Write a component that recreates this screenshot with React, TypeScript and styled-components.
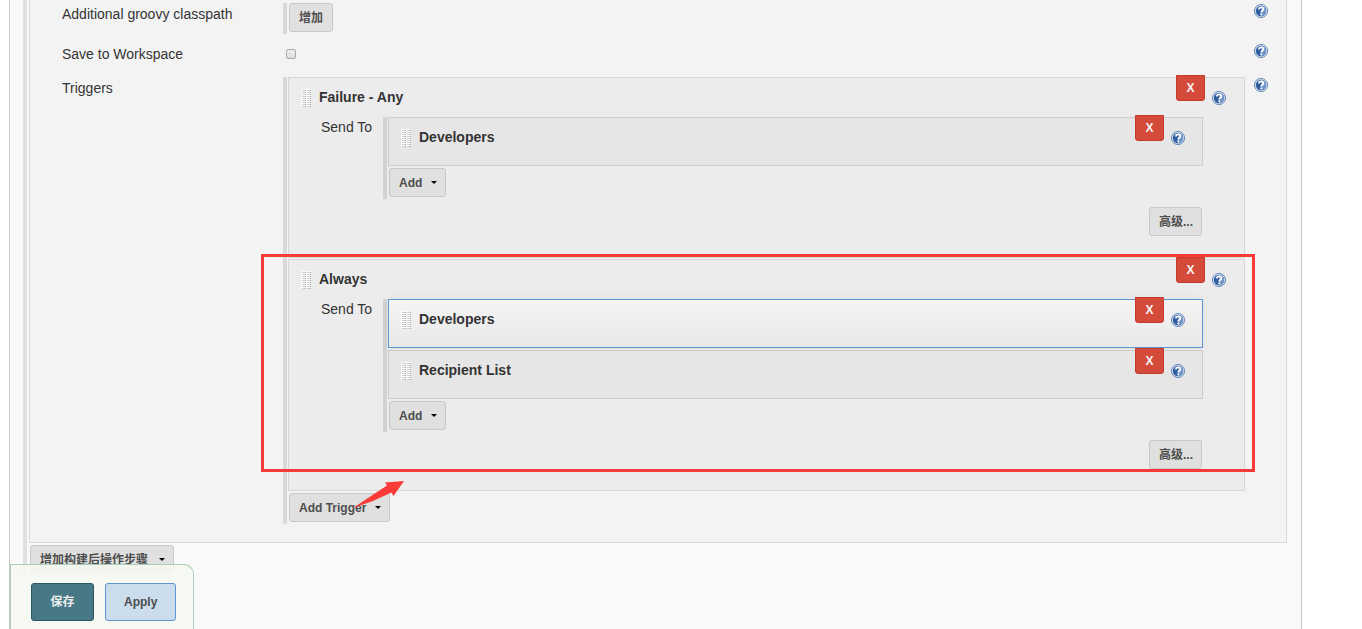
import React from "react";
import styled, { createGlobalStyle } from "styled-components";

const Global = createGlobalStyle`
  *, *::before, *::after { box-sizing: border-box; }
  body {
    margin: 0;
    background: #fff;
    color: #333;
    font: 14px/20px "Liberation Sans", "Noto Sans CJK SC", sans-serif;
  }
`;

const Page = styled.main`
  min-height: 100vh;
  margin: 0 60px 0 9px;
  padding: 0 14px 53px 13px;
  background: #f9f9f9;
  border: solid #c8c8c8;
  border-width: 0 1px;
`;

const Repeatable = styled.div<{ $gap?: number; $tone?: string }>`
  min-width: 0;
  padding: 0 0 2px ${(p) => p.$gap ?? 1}px;
  border-left: 4px solid ${(p) => p.$tone ?? "#d9d9d9"};
`;

const Step = styled.section`
  padding: 3px 18px 18px 32px;
  margin-bottom: 2px;
  background: #f3f3f3;
  border: 1px solid #d9d9d9;
  border-top: 0;
`;

const Row = styled.div<{ $height?: number }>`
  display: grid;
  grid-template-columns: 221px minmax(0, 1fr) 14px;
  align-items: start;
  min-height: ${(p) => p.$height ?? 0}px;
`;

const Label = styled.label`
  padding-top: 1px;
`;

const Check = styled.input`
  appearance: none;
  display: block;
  width: 10px;
  height: 10px;
  margin: 6px 3px;
  border: 1px solid #aaa;
  border-radius: 2px;
  background: linear-gradient(#eee, #dcdcdc);
`;

const Button = styled.button<{ $width?: number }>`
  display: inline-flex;
  align-items: center;
  justify-content: space-between;
  gap: 9px;
  height: 29px;
  min-width: ${(p) => p.$width ?? 44}px;
  margin: 0 0 0 1px;
  padding: 0 8px 0 9px;
  border: 1px solid #c8c8c8;
  border-radius: 3px;
  background: #e0e0e0;
  color: #4d4d4d;
  font: bold 12px/18px "Liberation Sans", "Noto Sans CJK SC", sans-serif;
  white-space: nowrap;
  vertical-align: top;
`;

const Caret = styled.span`
  border: 3px solid transparent;
  border-top-color: #000;
  border-bottom: 0;
`;

const HelpLink = styled.a`
  display: block;
  width: 14px;
  height: 14px;
`;

const HelpIcon = styled.svg`
  display: block;
`;

const RowHelp = styled.div`
  justify-self: end;
  margin: 1px 0 0;
`;

const Body = styled.div`
  min-width: 0;
  margin-right: 9px;
`;

const Chunk = styled.section<{ $inner?: boolean; $active?: boolean; $last?: boolean }>`
  position: relative;
  min-height: 49px;
  margin-bottom: ${(p) => (p.$inner || p.$last ? 2 : 1)}px;
  border: 1px solid ${(p) => (p.$active ? "#5c95cf" : p.$inner ? "#cdcdcd" : "#d6d6d6")};
  background: ${(p) =>
    p.$active ? "linear-gradient(#f4f4f4, #e9e9e9)" : p.$inner ? "#e6e6e6" : "#ececec"};
  box-shadow: ${(p) => (p.$active ? "0 0 10px rgba(0, 0, 0, 0.06)" : "none")};
`;

const ChunkHead = styled.header<{ $inner?: boolean }>`
  display: flex;
  align-items: flex-start;
  height: 39px;
  padding: 0 ${(p) => (p.$inner ? 17 : 18)}px 0 12px;
`;

const Handle = styled.svg`
  display: block;
  flex: none;
  margin: 11px 8px 0 0;
`;

const Title = styled.h3`
  flex: 1;
  margin: 9px 0 0;
  font: bold 14px/20px "Liberation Sans", sans-serif;
`;

const Delete = styled.button`
  width: 29px;
  height: 26px;
  margin: -3px 7px 0 0;
  padding: 0;
  border: 1px solid #c4392b;
  border-radius: 0 0 3px 3px;
  background: #d54b3b;
  color: #f4f4f4;
  font: bold 12px/18px "Liberation Sans", sans-serif;
`;

const HeadHelp = styled.div`
  margin-top: 13px;
`;

const SendRow = styled.div`
  display: grid;
  grid-template-columns: 62px minmax(0, 1fr);
  padding: 0 41px 0 32px;
`;

const Advanced = styled.div`
  display: flex;
  justify-content: flex-end;
  padding: 8px 42px 21px 0;
`;

const Marker = styled.div`
  position: absolute;
  z-index: 2;
  top: -6px;
  right: -11px;
  bottom: 18px;
  left: -28px;
  border: 3px solid #fc3a37;
  pointer-events: none;
`;

const Arrow = styled.svg`
  position: absolute;
  z-index: 2;
  left: 64px;
  bottom: -19px;
  pointer-events: none;
`;

const SaveBar = styled.footer`
  position: fixed;
  z-index: 3;
  bottom: 0;
  left: 10px;
  display: flex;
  gap: 11px;
  padding: 18px 17px 8px 20px;
  border: 1px solid #a9cdb9;
  border-bottom: 0;
  border-radius: 0 10px 0 0;
  background: rgba(244, 248, 240, 0.9);
`;

const Submit = styled.button<{ $primary?: boolean }>`
  height: 38px;
  min-width: 63px;
  padding: 0 18px;
  border: 1px solid ${(p) => (p.$primary ? "#2c5566" : "#5c95cf")};
  border-radius: 3px;
  background: ${(p) => (p.$primary ? "#467886" : "#cbdced")};
  color: ${(p) => (p.$primary ? "#eee" : "#4d4d4d")};
  font: bold 12px/18px "Liberation Sans", "Noto Sans CJK SC", sans-serif;
`;

const Help = () => (
  <HelpLink href="#help" aria-label="Help">
    <HelpIcon width="14" height="14" viewBox="0 0 14 14">
      <circle cx="7" cy="7" r="6.5" fill="#e4edf8" stroke="#5a7fb2" />
      <circle cx="7" cy="7" r="5.2" fill="#2f5c9e" />
      <path d="M7 1.8a5.2 5.2 0 0 1 0 10.4z" fill="#7095c6" />
      <path
        d="M4.9 5.4C4.9 2.8 9.4 2.8 9.4 5.2 9.4 6.9 7.2 6.7 7.2 8.6M7.2 9.6v1.6"
        fill="none"
        stroke="#fff"
        strokeWidth="1.8"
      />
    </HelpIcon>
  </HelpLink>
);

const Grip = () => (
  <Handle width="10" height="18" viewBox="0 0 10 18" shapeRendering="crispEdges" aria-hidden="true">
    <path d="M0 0h10v18H0z" fill="#fafafa" />
    <path d="M3 1v17M8 1v17" stroke="#d2d2d2" strokeWidth="4" strokeDasharray="1 1" />
    <path d="M4.5 1v17M9.5 1v17" stroke="#a8a8a8" strokeDasharray="1 1" />
  </Handle>
);

const Head = ({ title, inner }: { title: string; inner?: boolean }) => (
  <ChunkHead $inner={inner}>
    <Grip />
    <Title>{title}</Title>
    <Delete type="button" aria-label={`Delete ${title}`}>X</Delete>
    <HeadHelp>
      <Help />
    </HeadHelp>
  </ChunkHead>
);

type TriggerProps = {
  title: string;
  recipients: string[];
  active?: string;
  last?: boolean;
  children?: React.ReactNode;
};

const Trigger = ({ title, recipients, active, last, children }: TriggerProps) => (
  <Chunk $last={last}>
    <Head title={title} />
    <SendRow>
      <span>Send To</span>
      <Repeatable $tone="#d2d2d2">
        {recipients.map((name) => (
          <Chunk key={name} $inner $active={name === active}>
            <Head title={name} inner />
          </Chunk>
        ))}
        <Button type="button">
          Add <Caret />
        </Button>
      </Repeatable>
    </SendRow>
    <Advanced>
      <Button type="button">高级...</Button>
    </Advanced>
    {children}
  </Chunk>
);

export default function App() {
  return (
    <>
      <Global />
      <Page>
        <Repeatable $gap={2} $tone="#e0e0e0">
          <Step>
            <Row $height={40}>
              <Label htmlFor="classpath">Additional groovy classpath</Label>
              <Body>
                <Repeatable>
                  <Button id="classpath" type="button">增加</Button>
                </Repeatable>
              </Body>
              <RowHelp><Help /></RowHelp>
            </Row>
            <Row $height={34}>
              <Label htmlFor="workspace">Save to Workspace</Label>
              <Body>
                <Check id="workspace" type="checkbox" />
              </Body>
              <RowHelp><Help /></RowHelp>
            </Row>
            <Row>
              <Label as="span">Triggers</Label>
              <Body>
                <Repeatable>
                  <Trigger title="Failure - Any" recipients={["Developers"]} />
                  <Trigger
                    title="Always"
                    recipients={["Developers", "Recipient List"]}
                    active="Developers"
                    last
                  >
                    <Marker />
                    <Arrow width="52" height="29" viewBox="0 0 52 29" aria-hidden="true">
                      <path d="M51 1L32 2.5 34 5.5 18 16 0 28 20 21 38.5 12.5 40.5 16z" fill="#fc3a37" />
                    </Arrow>
                  </Trigger>
                  <Button type="button">
                    Add Trigger <Caret />
                  </Button>
                </Repeatable>
              </Body>
              <RowHelp><Help /></RowHelp>
            </Row>
          </Step>
          <Button type="button" $width={144}>
            增加构建后操作步骤 <Caret />
          </Button>
        </Repeatable>
      </Page>
      <SaveBar>
        <Submit type="button" $primary>保存</Submit>
        <Submit type="button">Apply</Submit>
      </SaveBar>
    </>
  );
}
